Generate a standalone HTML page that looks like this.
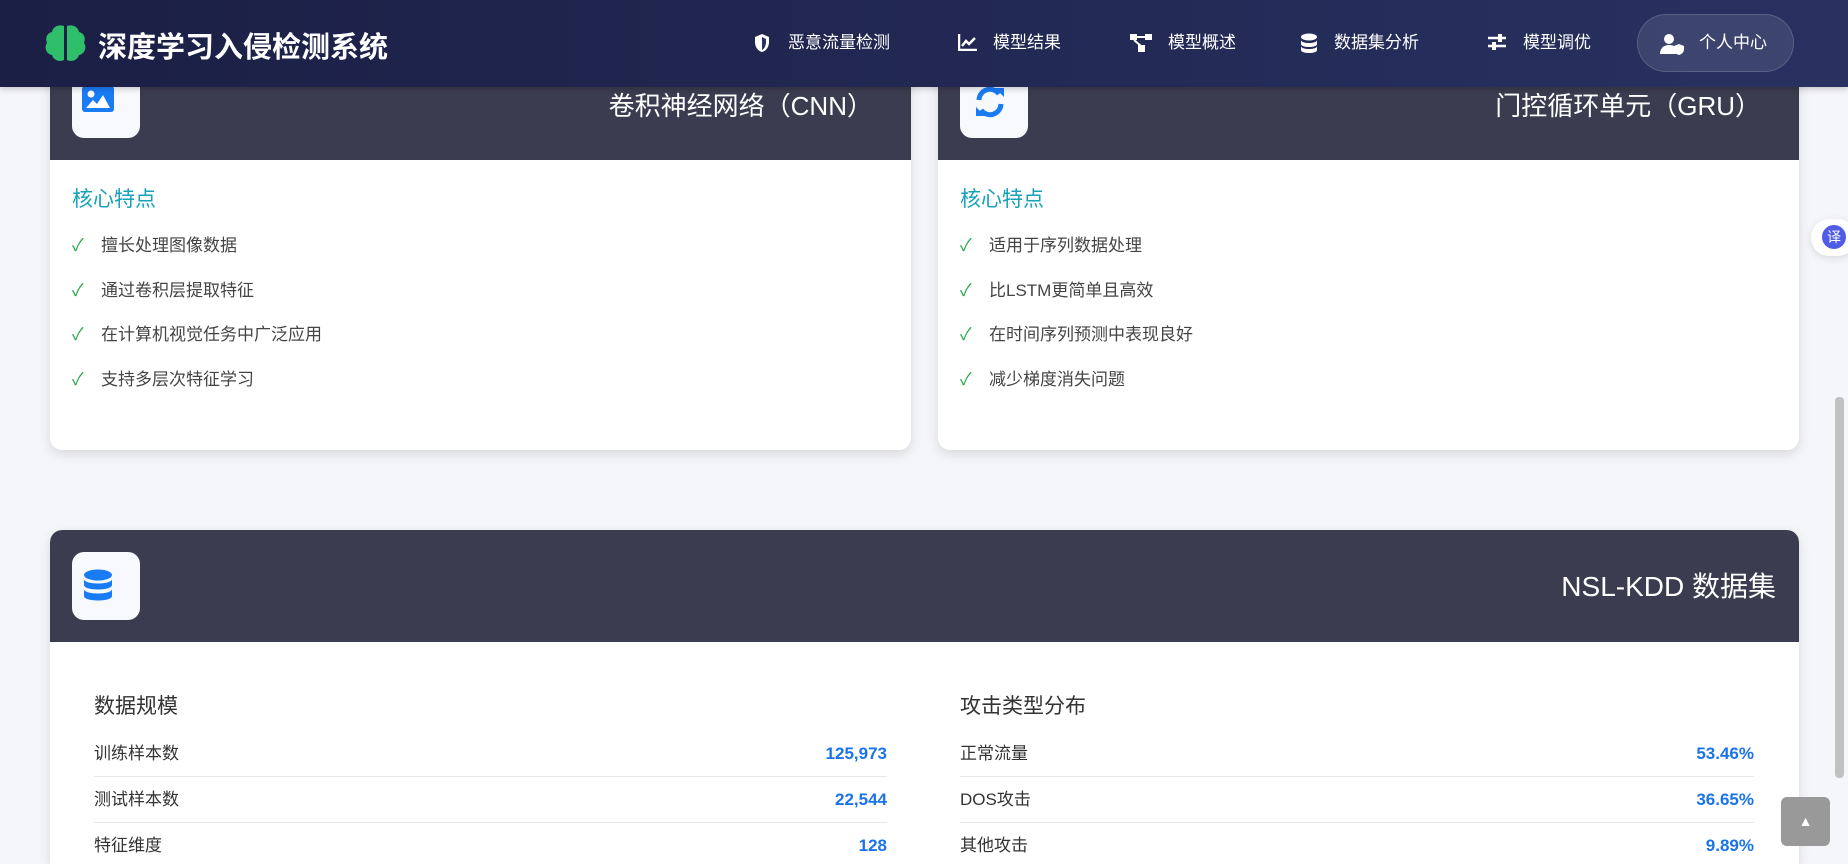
<!DOCTYPE html>
<html style="width:1848px;height:864px;overflow:hidden"><head><meta charset="utf-8"><style>
*{box-sizing:border-box;margin:0;padding:0}
body{width:1848px;height:864px;overflow:hidden;background:#f5f6fa;font-family:"Liberation Sans","Noto Sans CJK SC",sans-serif;position:relative}
.nav{position:absolute;left:0;top:0;width:1848px;height:87px;background:linear-gradient(90deg,#1b1f45,#283160);z-index:5;box-shadow:0 2px 6px rgba(0,0,0,.2)}
.logo{position:absolute;left:98px;top:24px;color:#fff;font-size:29px;font-weight:bold;letter-spacing:0}
.ni{position:absolute;top:31px;color:#fff;font-size:17px;height:24px;line-height:24px}
.ni svg{position:absolute;top:2px}
.btn{position:absolute;left:1637px;top:14px;width:157px;height:58px;border-radius:29px;background:rgba(255,255,255,.1);border:1px solid rgba(255,255,255,.15)}
.card{position:absolute;background:#fff;border-radius:12px;box-shadow:0 4px 12px rgba(0,0,0,.12);overflow:hidden}
.hd{position:absolute;left:0;width:100%;background:#3b3c50}
.ib{position:absolute;width:68px;height:68px;background:#f7f9fc;border-radius:12px}
.ttl{position:absolute;color:#fff;font-size:26px;right:38px}
.sub{position:absolute;left:22px;top:153px;color:#17a2b8;font-size:21px}
.li{position:absolute;left:22px;font-size:17px;color:#444}
.li b{color:#28a745;font-weight:normal;display:inline-block;width:29px}
.row{position:absolute;height:46px;border-bottom:1px solid #e8e8ec;font-size:17px;color:#333;line-height:46px}
.row span{position:absolute;right:0;color:#1a73e8;font-weight:bold}
.h3{position:absolute;font-size:21px;color:#333}
</style></head><body>
<div class="nav">
<svg style="position:absolute;left:44px;top:24px" width="43" height="38" viewBox="0 0 43 38"><path d="M20 2C14 0 9 3 8 8 3 9 1 14 3 19 0 23 2 30 8 31 10 37 16 38 20 36Z M23 2C29 0 34 3 35 8 40 9 42 14 40 19 43 23 41 30 35 31 33 37 27 38 23 36Z" fill="#2fbf6b"/></svg>
<div class="logo">深度学习入侵检测系统</div>
<div class="ni" style="left:788px"><svg style="left:-34px" width="16" height="20" viewBox="0 0 16 20"><path d="M8 1L1 4v5c0 5 3 9 7 10 4-1 7-5 7-10V4Z" fill="#fff"/><path d="M8 4v13c2-1 4-4 4-8V6Z" fill="#283160"/></svg>恶意流量检测</div>
<div class="ni" style="left:993px"><svg style="left:-35px" width="20" height="18" viewBox="0 0 20 18"><path d="M1 1v16h18" stroke="#fff" stroke-width="2.5" fill="none"/><path d="M4 13l4-5 3 3 6-6" stroke="#fff" stroke-width="2.5" fill="none"/></svg>模型结果</div>
<div class="ni" style="left:1168px"><svg style="left:-39px" width="24" height="20" viewBox="0 0 24 20"><rect x="1" y="1" width="7" height="6" fill="#fff"/><rect x="16" y="1" width="7" height="6" fill="#fff"/><rect x="9" y="12" width="7" height="7" fill="#fff"/><path d="M8 4h8M5 7l7 6" stroke="#fff" stroke-width="2"/></svg>模型概述</div>
<div class="ni" style="left:1334px"><svg style="left:-34px" width="18" height="21" viewBox="0 0 18 21"><ellipse cx="9" cy="4" rx="8" ry="3.5" fill="#fff"/><path d="M1 7c0 4 16 4 16 0v4c0 4-16 4-16 0Z M1 13c0 4 16 4 16 0v4c0 4-16 4-16 0Z" fill="#fff"/></svg>数据集分析</div>
<div class="ni" style="left:1523px"><svg style="left:-36px" width="20" height="18" viewBox="0 0 20 18"><path d="M1 5h18M1 13h18" stroke="#fff" stroke-width="2.5"/><rect x="11" y="1" width="4" height="8" fill="#fff"/><rect x="5" y="9" width="4" height="8" fill="#fff"/></svg>模型调优</div>
<div class="btn"><div class="ni" style="left:61px;top:16px"><svg style="left:-39px" width="26" height="22" viewBox="0 0 26 22"><circle cx="9" cy="6" r="5" fill="#fff"/><path d="M0 21c0-6 4-9 9-9s7 2 8 4v5Z" fill="#fff"/><path d="M19 11l5 2v3c0 3-2 5-5 6-3-1-5-3-5-6v-3Z" fill="#fff"/></svg>个人中心</div></div>
</div>

<div class="card" style="left:50px;top:30px;width:861px;height:420px">
<div class="hd" style="top:0;height:130px"></div>
<div class="ib" style="left:22px;top:40px"><svg style="margin:16px 0 0 10px" width="32" height="26" viewBox="0 0 32 26"><rect width="32" height="26" rx="3" fill="#1a7cf5"/><circle cx="9" cy="8" r="3.5" fill="#fff"/><path d="M4 22l7-8 4 4 6-9 7 13Z" fill="#fff"/></svg></div>
<div class="ttl" style="top:56px">卷积神经网络（CNN）</div>
<div class="sub">核心特点</div>
<div class="li" style="top:201px"><b>✓</b>擅长处理图像数据</div>
<div class="li" style="top:246px"><b>✓</b>通过卷积层提取特征</div>
<div class="li" style="top:290px"><b>✓</b>在计算机视觉任务中广泛应用</div>
<div class="li" style="top:335px"><b>✓</b>支持多层次特征学习</div>
</div>

<div class="card" style="left:938px;top:30px;width:861px;height:420px">
<div class="hd" style="top:0;height:130px"></div>
<div class="ib" style="left:22px;top:40px"><svg style="margin:16px 0 0 14px" width="32" height="32" viewBox="0 0 32 32"><path d="M5 14A11 11 0 0 1 25 8" stroke="#1a7cf5" stroke-width="5" fill="none"/><path d="M21 2h9v9Z" fill="#1a7cf5"/><path d="M27 18A11 11 0 0 1 7 24" stroke="#1a7cf5" stroke-width="5" fill="none"/><path d="M11 30H2v-9Z" fill="#1a7cf5"/></svg></div>
<div class="ttl" style="top:56px">门控循环单元（GRU）</div>
<div class="sub">核心特点</div>
<div class="li" style="top:201px"><b>✓</b>适用于序列数据处理</div>
<div class="li" style="top:246px"><b>✓</b>比LSTM更简单且高效</div>
<div class="li" style="top:290px"><b>✓</b>在时间序列预测中表现良好</div>
<div class="li" style="top:335px"><b>✓</b>减少梯度消失问题</div>
</div>

<div class="card" style="left:50px;top:530px;width:1749px;height:334px;border-radius:12px 12px 0 0">
<div class="hd" style="top:0;height:112px;border-radius:12px 12px 0 0"></div>
<div class="ib" style="left:22px;top:22px"><svg style="margin:17px 0 0 11px" width="30" height="33" viewBox="0 0 30 33"><ellipse cx="15" cy="6" rx="14" ry="5.5" fill="#1a7cf5"/><path d="M1 10c0 6 28 6 28 0v6c0 6-28 6-28 0Z M1 20c0 6 28 6 28 0v7c0 6-28 6-28 0Z" fill="#1a7cf5"/></svg></div>
<div class="ttl" style="top:35px;right:23px;font-size:28px">NSL-KDD 数据集</div>
<div class="h3" style="left:44px;top:160px">数据规模</div>
<div class="row" style="left:44px;top:201px;width:793px">训练样本数<span>125,973</span></div>
<div class="row" style="left:44px;top:247px;width:793px">测试样本数<span>22,544</span></div>
<div class="row" style="left:44px;top:293px;width:793px;border:0">特征维度<span>128</span></div>
<div class="h3" style="left:910px;top:160px">攻击类型分布</div>
<div class="row" style="left:910px;top:201px;width:794px">正常流量<span>53.46%</span></div>
<div class="row" style="left:910px;top:247px;width:794px">DOS攻击<span>36.65%</span></div>
<div class="row" style="left:910px;top:293px;width:794px;border:0">其他攻击<span>9.89%</span></div>
</div>

<div style="position:absolute;left:1835px;top:397px;width:9px;height:381px;background:#c1c1c1;border-radius:4px"></div>
<div style="position:absolute;left:1811px;top:219px;width:45px;height:37px;background:#fff;border-radius:18px;box-shadow:0 2px 8px rgba(0,0,0,.12)"><div style="position:absolute;left:11px;top:6px;width:24px;height:24px;border-radius:12px;background:#4f5ce8;color:#fff;font-size:14px;text-align:center;line-height:24px">译</div></div>
<div style="position:absolute;left:1781px;top:797px;width:49px;height:49px;background:#999;border-radius:6px;color:#fff;text-align:center;line-height:49px;font-size:14px">▲</div>
</body></html>
